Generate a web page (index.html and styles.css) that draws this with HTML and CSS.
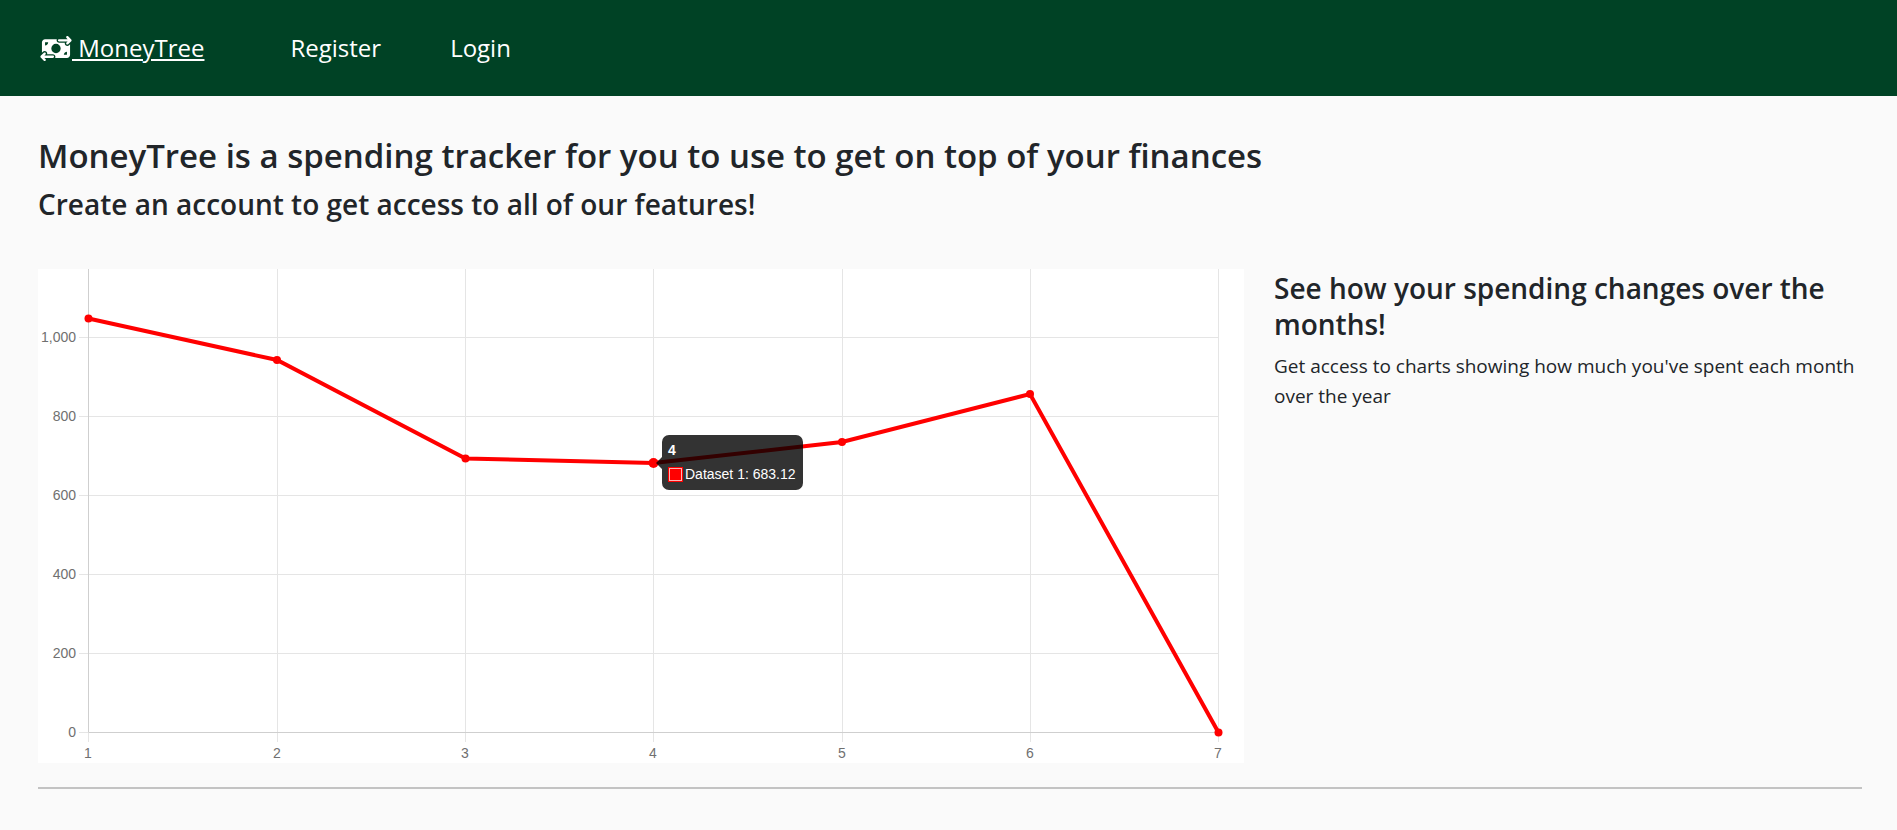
FILE: index.html
```html
<!DOCTYPE html>
<html lang="en">
<head>
<meta charset="utf-8">
<meta name="viewport" content="width=device-width, initial-scale=1">
<title>MoneyTree</title>
<link rel="stylesheet" href="styles.css">
</head>
<body>
<header class="site-header">
  <nav class="nav" aria-label="Main">
    <a class="brand" href="#"><svg class="brand-icon" viewBox="0 0 640 512" aria-hidden="true"><path fill="currentColor" d="M535 41c-9.4-9.4-9.4-24.6 0-33.9s24.6-9.4 33.9 0l64 64c4.5 4.5 7 10.6 7 17s-2.500 12.500-7 17l-64 64c-9.400 9.400-24.600 9.400-33.900 0s-9.400-24.600 0-33.900l23-23L384 112c-13.300 0-24-10.700-24-24s10.700-24 24-24l174.100 0L535 41zM105 377l-23 23L256 400c13.300 0 24 10.700 24 24s-10.700 24-24 24L81.900 448l23 23c9.400 9.400 9.400 24.600 0 33.900s-24.600 9.400-33.900 0L7 441c-4.500-4.500-7-10.600-7-17s2.500-12.500 7-17l64-64c9.400-9.400 24.600-9.400 33.900 0s9.400 24.600 0 33.900zM96 64H337.900c-3.700 7.200-5.900 15.300-5.900 24c0 28.700 23.300 52 52 52l117.400 0c-4 17 .6 35.500 13.800 48.800c20.300 20.300 53.200 20.300 73.500 0L608 169.500V384c0 35.300-28.700 64-64 64H302.100c3.700-7.200 5.900-15.300 5.900-24c0-28.700-23.300-52-52-52l-117.400 0c4-17-.6-35.500-13.800-48.800c-20.300-20.300-53.200-20.300-73.500 0L32 342.500V128c0-35.300 28.700-64 64-64zm64 64H96v64c35.300 0 64-28.700 64-64zM544 320c-35.300 0-64 28.700-64 64h64V320zM320 352a96 96 0 1 0 0-192 96 96 0 1 0 0 192z"/></svg><span class="brand-name">&nbsp;MoneyTree</span></a>
    <ul class="nav-links">
      <li><a class="nav-link" href="#">Register</a></li>
      <li><a class="nav-link" href="#">Login</a></li>
    </ul>
  </nav>
</header>
<main class="page">
  <h1 class="title">MoneyTree is a spending tracker for you to use to get on top of your finances</h1>
  <h2 class="subtitle">Create an account to get access to all of our features!</h2>
  <section class="feature">
    <svg class="chart" viewBox="0 0 1206 494" role="img" aria-label="Spending per month">
      <rect class="chart-bg" width="1206" height="494"/>
      <path class="grid-line" d="M41 68.500H1181M41 147.500H1181M41 226.500H1181M41 305.500H1181M41 384.500H1181M41 463.500H50M239.500 0V473M427.500 0V473M615.500 0V473M804.500 0V473M992.500 0V473M1180.500 0V473M50.500 464V473"/>
      <path class="axis-line" d="M50.500 0V463.500H1181"/>
      <g class="tick-y">
        <text x="38" y="73">1,000</text>
        <text x="38" y="152">800</text>
        <text x="38" y="231">600</text>
        <text x="38" y="310">400</text>
        <text x="38" y="389">200</text>
        <text x="38" y="468">0</text>
      </g>
      <g class="tick-x">
        <text x="50" y="489">1</text>
        <text x="239" y="489">2</text>
        <text x="427" y="489">3</text>
        <text x="615" y="489">4</text>
        <text x="804" y="489">5</text>
        <text x="992" y="489">6</text>
        <text x="1180" y="489">7</text>
      </g>
      <polyline class="series" points="50.500,49.500 239,91 427.500,189.500 615.500,194 804,173 992,125 1180.500,463.500"/>
      <g class="points">
        <circle cx="50.500" cy="49.500" r="4"/>
        <circle cx="239" cy="91" r="4"/>
        <circle cx="427.500" cy="189.500" r="4"/>
        <circle cx="615.500" cy="194" r="5"/>
        <circle cx="804" cy="173" r="4"/>
        <circle cx="992" cy="125" r="4"/>
        <circle cx="1180.500" cy="463.500" r="4"/>
      </g>
      <path class="tip" d="M631 166H758a7 7 0 0 1 7 7V214a7 7 0 0 1-7 7H631a7 7 0 0 1-7-7V200L618 194L624 188V173a7 7 0 0 1 7-7z"/>
      <text class="tip-title" x="630" y="186">4</text>
      <rect class="tip-key" x="630" y="198" width="15" height="15"/>
      <rect class="tip-key-line" x="631.500" y="199.500" width="12" height="12"/>
      <text class="tip-text" x="647" y="210">Dataset 1: 683.12</text>
    </svg>
    <div class="feature-text">
      <h2 class="subtitle">See how your spending changes over the months!</h2>
      <p class="copy">Get access to charts showing how much you've spent each month over the year</p>
    </div>
  </section>
  <hr class="divider">
</main>
</body>
</html>
```
FILE: styles.css
```css
* { box-sizing: border-box; }

body {
  margin: 0;
  background: #fafafa;
  color: #212529;
  font-family: "Open Sans", "Noto Sans", sans-serif;
  font-size: 19px;
  line-height: 30px;
}

.site-header {
  background: #004225;
  color: #fff;
  padding: 28px 40px;
}

.nav {
  display: flex;
  align-items: center;
  gap: 86px;
  font-size: 24px;
  line-height: 40px;
}

.nav-links {
  display: flex;
  gap: 69px;
  margin: 0;
  padding: 0;
  list-style: none;
}

.brand { display: flex; align-items: center; color: inherit; text-decoration: none; }
.brand-icon { width: 32px; height: 25px; }
.brand-name { text-decoration: underline; }
.nav-link { color: inherit; text-decoration: none; }

.page { padding: 38px 35px 39px 38px; }

.title, .subtitle { margin: 0; font-weight: 600; }
.title { margin-bottom: 9px; font-size: 33px; line-height: 43px; }
.subtitle { font-size: 28px; line-height: 36px; }

.feature {
  display: grid;
  grid-template-columns: minmax(0, 1206fr) minmax(0, 588fr);
  gap: 30px;
  align-items: start;
  margin-top: 47px;
}

.chart { display: block; width: 100%; height: auto; font-family: "Liberation Sans", Arial, sans-serif; font-size: 14px; }
.chart-bg { fill: #fff; }
.grid-line { fill: none; stroke: #e5e5e5; }
.axis-line { fill: none; stroke: #cfcfcf; }
.tick-y, .tick-x { fill: #707070; }
.tick-y { text-anchor: end; }
.tick-x { text-anchor: middle; }
.series { fill: none; stroke: #f00; stroke-width: 4px; }
.points { fill: #f00; }
.tip { fill: #000; fill-opacity: 0.8; }
.tip-title, .tip-text { fill: #fff; }
.tip-title { font-weight: 700; }
.tip-key { fill: #f00; }
.tip-key-line { fill: none; stroke: #fff; stroke-opacity: 0.7; }

.feature-text .subtitle { margin: 1px 0 9px; }
.copy { margin: 0; }

.divider { height: 2px; margin: 24px 0 0; border: 0; background: #c3c3c3; }
```
